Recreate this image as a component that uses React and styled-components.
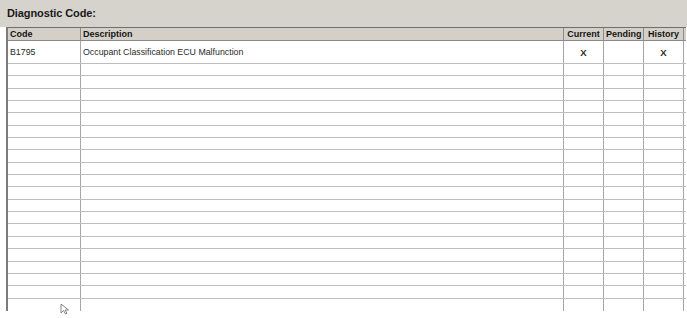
import React from "react";
import styled, { createGlobalStyle } from "styled-components";

const Global = createGlobalStyle`
  html, body { margin: 0; padding: 0; background: #ffffff; }
  body { font-family: "Liberation Sans", Arial, sans-serif; }
`;

const Page = styled.div`
  position: relative;
  width: 687px;
  height: 318px;
  overflow: hidden;
  background: #ffffff;
  display: flex;
  flex-direction: column;
`;

const TitleBar = styled.div`
  height: 27px;
  background: #d6d3cd;
  padding: 6px 0 0 7px;
  box-sizing: border-box;
  font-size: 11px;
  font-weight: bold;
  color: #1a1a1a;
  line-height: 14px;
  letter-spacing: -0.1px;
`;

const Table = styled.div`
  margin-left: 6px;
  width: 678px;
  border-left: 2px solid #7c7c7c;
  display: flex;
  flex-direction: column;
`;

const Row = styled.div`
  display: grid;
  grid-template-columns: 73px 483px 40px 40px 40px;
  height: ${(p) => p.$h}px;
  box-sizing: border-box;
  border-bottom: ${(p) => (p.$last ? "none" : "1px solid #bebebe")};
`;

const HeaderRow = styled.div`
  display: grid;
  grid-template-columns: 73px 483px 40px 40px 40px;
  height: 14px;
  box-sizing: border-box;
  background: #d4d0c8;
  border-top: 1px solid #6e6e6e;
  border-bottom: 1px solid #8a8a8a;
`;

const HeadCell = styled.div`
  font-size: 9px;
  font-weight: bold;
  color: #141414;
  line-height: 12px;
  padding: 0 2px;
  text-align: ${(p) => (p.$center ? "center" : "left")};
  border-right: 1px solid #8c8c8c;
  white-space: nowrap;
  overflow: hidden;
`;

const Cell = styled.div`
  font-size: ${(p) => (p.$bold ? 9.5 : 8.8)}px;
  color: #2a2a2a;
  display: flex;
  align-items: center;
  justify-content: ${(p) => (p.$center ? "center" : "flex-start")};
  padding: 0 2px;
  border-right: 1px solid #a6a6a6;
  white-space: nowrap;
  overflow: hidden;
  font-weight: ${(p) => (p.$bold ? "bold" : "normal")};
`;

const Cursor = styled.svg`
  position: absolute;
  left: 60px;
  top: 303px;
`;

const columns = [
  { label: "Code" },
  { label: "Description" },
  { label: "Current", center: true },
  { label: "Pending", center: true },
  { label: "History", center: true },
];

const data = [["B1795", "Occupant Classification ECU Malfunction", "X", "", "X"]];

const EMPTY_ROWS = 20;
const ROW_H = 12.35;

export default function App() {
  return (
    <Page>
      <Global />
      <TitleBar>Diagnostic Code:</TitleBar>
      <Table>
        <HeaderRow>
          {columns.map((c) => (
            <HeadCell key={c.label} $center={c.center}>
              {c.label}
            </HeadCell>
          ))}
        </HeaderRow>
        {data.map((r) => (
          <Row key={r[0]} $h={23}>
            {r.map((v, i) => (
              <Cell key={i} $center={i >= 2} $bold={i >= 2}>
                {v}
              </Cell>
            ))}
          </Row>
        ))}
        {Array.from({ length: EMPTY_ROWS }).map((_, k) => (
          <Row key={k} $h={ROW_H} $last={k === EMPTY_ROWS - 1}>
            {columns.map((c) => (
              <Cell key={c.label} />
            ))}
          </Row>
        ))}
      </Table>
      <Cursor width="10" height="12" viewBox="0 0 10 12">
        <path d="M1 1 L1 10 L3.5 7.5 L5.5 11 L7 10.3 L5 7 L8.5 7 Z" fill="#fff" stroke="#666" strokeWidth="0.8" />
      </Cursor>
    </Page>
  );
}
